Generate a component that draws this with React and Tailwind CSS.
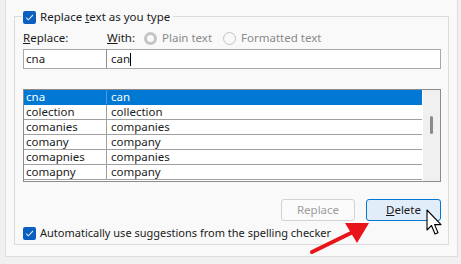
import React from "react";

const F = { fontFamily: '"Noto Sans", "Open Sans", sans-serif' };

function Check() {
  return (
    <div className="w-[13px] h-[13px] rounded-[2px] bg-[#0a5fc0] flex items-center justify-center shrink-0">
      <svg width="9" height="7" viewBox="0 0 9 7">
        <path d="M1 3.6 L3.3 5.8 L8 1" fill="none" stroke="#d8e6f7" strokeWidth="1.1" />
      </svg>
    </div>
  );
}

const rows = [
  ["cna", "can"],
  ["colection", "collection"],
  ["comanies", "companies"],
  ["comany", "company"],
  ["comapnies", "companies"],
  ["comapny", "company"],
];

export default function App() {
  return (
    <div className="w-[461px] h-[264px] bg-[#f0f0f0] relative overflow-hidden text-[11px] text-[#1b1b1b]" style={F}>
      <div className="ml-[5px] w-[453px] h-[257px] bg-[#f9f9f9] border-l border-r border-b border-[#dedede] pt-[16px] pl-[8px]">
        <div className="relative w-[435px] h-[229px] border border-[#dcdcdc] pl-[8px] pr-[7px]">
          <div className="absolute left-[7px] top-[-7px] flex items-center gap-[4px] bg-[#f9f9f9] pl-[1px] pr-[3px] h-[14px]">
            <Check />
            <span className="leading-[14px] text-[11.5px]">
              Replace <span className="underline">t</span>ext as you type
            </span>
          </div>
          <div className="mt-[13px] flex items-center h-[16px] leading-[16px] text-[11.5px]">
            <div className="w-[84px]">
              <span className="underline">R</span>eplace:
            </div>
            <div className="w-[37px]">
              <span className="underline">W</span>ith:
            </div>
            <div className="flex items-center gap-[5px] text-[#8a8a8a]">
              <div className="w-[13px] h-[13px] rounded-full border-[3.5px] border-[#c4c4c4] bg-[#f9f9f9]" />
              <span>Plain text</span>
            </div>
            <div className="flex items-center gap-[5px] text-[#8a8a8a] ml-[11px]">
              <div className="w-[13px] h-[13px] rounded-full border border-[#c4c4c4] bg-[#f9f9f9]" />
              <span>Formatted text</span>
            </div>
          </div>
          <div className="mt-[3px] flex h-[20px] text-[11.5px]">
            <div className="w-[84px] h-[20px] bg-white border border-[#a8a8a8] border-r-[#909090] pl-[2px] leading-[18px]">cna</div>
            <div className="w-[334px] h-[20px] bg-white border border-l-0 border-[#a8a8a8] pl-[4px] leading-[18px] flex items-center">
              <span>can</span>
              <span className="inline-block w-[1px] h-[13px] bg-black" />
            </div>
          </div>
          <div className="mt-[20px] w-[418px] h-[93px] border border-[#8c8c8c] flex bg-white text-[11.5px]">
            <div className="flex-1 flex flex-col">
              {rows.map((r, i) => (
                <div
                  key={i}
                  className={
                    i === 0
                      ? "flex h-[15px] bg-[#0078d4] text-white border-b border-[#0078d4] overflow-hidden"
                      : "flex h-[15px] border-b border-[#a0a0a0] overflow-hidden"
                  }
                >
                  <div className={i === 0 ? "w-[83px] pl-[2px] leading-[14px] border-r border-[#4a9ae0]" : "w-[83px] pl-[2px] leading-[14px] border-r border-[#a0a0a0]"}>
                    {r[0]}
                  </div>
                  <div className="pl-[4px] leading-[14px]">{r[1]}</div>
                </div>
              ))}
            </div>
            <div className="w-[18px] bg-[#f0f0f0] border-l border-white relative">
              <div className="absolute left-[7px] top-[26px] w-[3px] h-[18px] rounded-full bg-[#8a8a8a]" />
            </div>
          </div>
          <div className="mt-[17px] flex justify-end gap-[11px] h-[22px] text-[11.5px]">
            <div className="w-[74px] h-[22px] rounded-[3px] border border-[#d2d2d2] bg-[#fbfbfb] text-[#9d9d9d] flex items-center justify-center">
              Replace
            </div>
            <div className="w-[75px] h-[22px] rounded-[3px] border border-[#0078d4] bg-[#e1eefa] flex items-center justify-center">
              <span><span className="underline">D</span>elete</span>
            </div>
          </div>
          <div className="mt-[5px] flex items-center gap-[4px] h-[14px]">
            <Check />
            <span className="leading-[14px]">
              Automatically use sug<span className="underline">g</span>estions from the spelling checker
            </span>
          </div>
        </div>
      </div>
      <svg className="absolute left-[305px] top-[218px]" width="70" height="40" viewBox="0 0 70 40">
        <path d="M7 34 L48 14" stroke="#e8141a" strokeWidth="4" strokeLinecap="round" />
        <path d="M64 5 L40 5 L52 25 Z" fill="#e8141a" />
      </svg>
      <svg className="absolute left-[426px] top-[209px]" width="18" height="28" viewBox="0 0 18 28">
        <path d="M1 1 L1 21 L5.5 16.5 L9 25 L12 23.8 L8.6 15.6 L15 15.6 Z" fill="white" stroke="black" strokeWidth="1.1" strokeLinejoin="round" />
      </svg>
    </div>
  );
}
